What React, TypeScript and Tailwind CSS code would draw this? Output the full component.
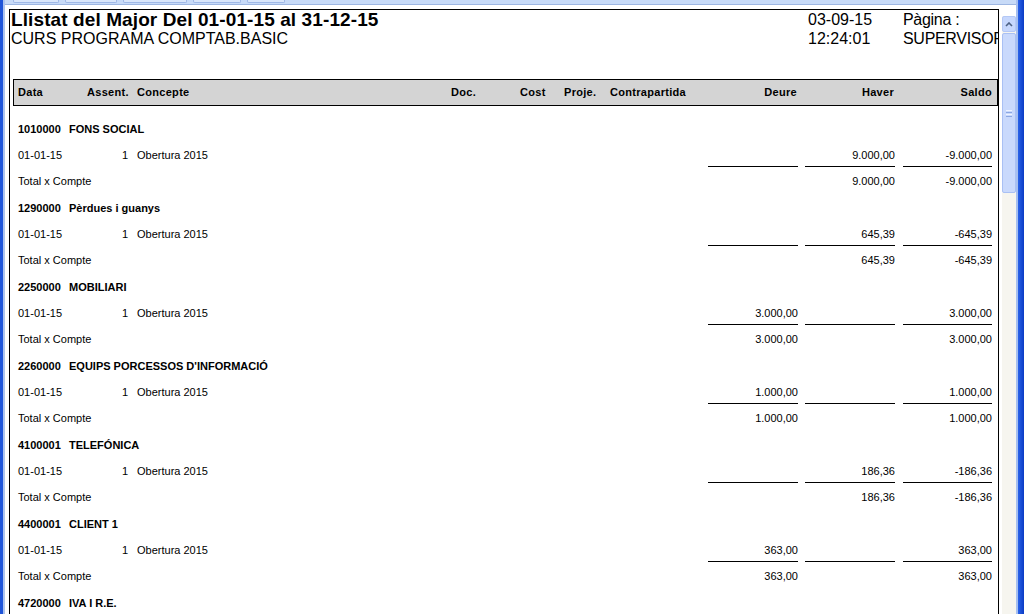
import React from "react"

type Account = {
    code: string
    name: string
    deure?: string
    haver?: string
    saldo?: string
    headOnly?: boolean
}

const accounts: Account[] = [
    { code: "1010000", name: "FONS SOCIAL", haver: "9.000,00", saldo: "-9.000,00" },
    { code: "1290000", name: "Pèrdues i guanys", haver: "645,39", saldo: "-645,39" },
    { code: "2250000", name: "MOBILIARI", deure: "3.000,00", saldo: "3.000,00" },
    { code: "2260000", name: "EQUIPS PORCESSOS D'INFORMACIÓ", deure: "1.000,00", saldo: "1.000,00" },
    { code: "4100001", name: "TELEFÓNICA", haver: "186,36", saldo: "-186,36" },
    { code: "4400001", name: "CLIENT 1", deure: "363,00", saldo: "363,00" },
    { code: "4720000", name: "IVA I R.E.", headOnly: true },
]

function ValueCells({ a, underline }: { a: Account; underline?: boolean }) {
    const cell = underline
        ? "h-[25px] pt-[2px] border-b border-black flex items-center justify-end"
        : "h-[27px] flex items-center justify-end"
    return (
        <>
            <div className={`w-[90px] shrink-0 ${cell}`}>{a.deure}</div>
            <div className="w-[7px] shrink-0" />
            <div className={`w-[90px] shrink-0 ${cell}`}>{a.haver}</div>
            <div className="w-[8px] shrink-0" />
            <div className={`w-[89px] shrink-0 ${cell}`}>{a.saldo}</div>
        </>
    )
}

function AccountGroup({ a }: { a: Account }) {
    return (
        <div className="flex flex-col shrink-0 text-[11px] leading-none">
            <div className="h-[26px] shrink-0 flex items-center pl-[8px] font-bold">
                <span className="w-[51px] shrink-0">{a.code}</span>
                <span>{a.name}</span>
            </div>
            {!a.headOnly && (
                <>
                    <div className="h-[26px] shrink-0 flex items-start pl-[8px]">
                        <div className="w-[69px] shrink-0 h-[25px] pt-[2px] flex items-center">01-01-15</div>
                        <div className="w-[50px] shrink-0 h-[25px] pt-[2px] flex items-center justify-end pr-[9px]">1</div>
                        <div className="w-[571px] shrink-0 h-[25px] pt-[2px] flex items-center">Obertura 2015</div>
                        <ValueCells a={a} underline />
                    </div>
                    <div className="h-[27px] shrink-0 flex items-center pl-[8px]">
                        <div className="w-[690px] shrink-0">Total x Compte</div>
                        <ValueCells a={a} />
                    </div>
                </>
            )}
        </div>
    )
}

function Scrollbar() {
    return (
        <div className="w-[14px] shrink-0 mt-[11px] flex flex-col bg-[#f6f5ef]">
            <div className="h-[16px] shrink-0 rounded-[2px] border border-[#b4c8f6] bg-[#c6d7fd] flex items-center justify-center">
                <svg width="8" height="5" viewBox="0 0 8 5">
                    <path d="M1 4 L4 1 L7 4" fill="none" stroke="#4d6185" strokeWidth="1.6" />
                </svg>
            </div>
            <div className="h-[160px] shrink-0 mt-[1px] rounded-[2px] border border-[#a9c0f4] bg-[#c9d9fc] flex flex-col items-center justify-center gap-[1px]">
                <div className="w-[6px] h-[1px] bg-[#eef3ff]" />
                <div className="w-[6px] h-[1px] bg-[#8ba7e3]" />
                <div className="w-[6px] h-[1px] bg-[#eef3ff]" />
                <div className="w-[6px] h-[1px] bg-[#8ba7e3]" />
            </div>
        </div>
    )
}

export default function App() {
    return (
        <div className="w-[1024px] h-[614px] overflow-hidden bg-white flex font-['Liberation_Sans',Arial,sans-serif] text-black">
            {/* left window frame */}
            <div className="w-[3px] shrink-0 bg-[#1f55d9]" />
            <div className="w-[2px] shrink-0 bg-[#aec4ee]" />

            <div className="flex-1 flex flex-col min-h-0">
                {/* toolbar remnant */}
                <div className="h-[5px] shrink-0 bg-[#c7daf7] border-b border-[#9db6e2] flex gap-[6px] px-[8px]">
                    <div className="w-[46px] h-[3px] rounded-b-[2px] border-x border-b border-[#9fb8e6] bg-[#d9e6fa]" />
                    <div className="w-[52px] h-[3px] rounded-b-[2px] border-x border-b border-[#9fb8e6] bg-[#d9e6fa]" />
                    <div className="w-[64px] h-[3px] rounded-b-[2px] border-x border-b border-[#9fb8e6] bg-[#d9e6fa]" />
                    <div className="w-[48px] h-[3px] rounded-b-[2px] border-x border-b border-[#9fb8e6] bg-[#d9e6fa]" />
                    <div className="w-[38px] h-[3px] rounded-b-[2px] border-x border-b border-[#9fb8e6] bg-[#d9e6fa]" />
                </div>

                <div className="flex-1 flex min-h-0">
                    <div className="w-[4px] shrink-0" />
                    {/* report page */}
                    <div className="w-[990px] shrink-0 mt-[4px] border border-black overflow-hidden flex flex-col self-start">
                        <div className="flex pl-[1px] shrink-0">
                            <div className="w-[797px] shrink-0 flex flex-col">
                                <div className="text-[19px] leading-[20px] font-bold tracking-[0.1px]">Llistat del Major Del 01-01-15 al 31-12-15</div>
                                <div className="text-[16px] leading-[17px]">CURS PROGRAMA COMPTAB.BASIC</div>
                            </div>
                            <div className="w-[95px] shrink-0 flex flex-col text-[16px]">
                                <div className="leading-[20px]">03-09-15</div>
                                <div className="leading-[17px]">12:24:01</div>
                            </div>
                            <div className="flex-1 min-w-0 flex flex-col text-[16px] whitespace-nowrap tracking-[-0.3px]">
                                <div className="leading-[20px]">Pàgina :</div>
                                <div className="leading-[17px]">SUPERVISOR</div>
                            </div>
                        </div>

                        {/* column header */}
                        <div className="shrink-0 mt-[32px] ml-[3px] h-[27px] border border-black bg-[#d4d4d4] flex items-center pl-[4px] text-[11px] font-bold tracking-[0.3px] leading-none">
                            <div className="w-[69px] shrink-0">Data</div>
                            <div className="w-[50px] shrink-0">Assent.</div>
                            <div className="w-[314px] shrink-0">Concepte</div>
                            <div className="w-[69px] shrink-0">Doc.</div>
                            <div className="w-[44px] shrink-0">Cost</div>
                            <div className="w-[46px] shrink-0">Proje.</div>
                            <div className="w-[98px] shrink-0">Contrapartida</div>
                            <div className="w-[90px] shrink-0 text-right pr-[1px]">Deure</div>
                            <div className="w-[7px] shrink-0" />
                            <div className="w-[90px] shrink-0 text-right pr-[1px]">Haver</div>
                            <div className="w-[8px] shrink-0" />
                            <div className="w-[89px] shrink-0 text-right">Saldo</div>
                        </div>

                        <div className="mt-[10px] flex flex-col shrink-0 pb-[20px]">
                            {accounts.map((a) => (
                                <AccountGroup key={a.code} a={a} />
                            ))}
                        </div>
                    </div>
                    <div className="w-[3px] shrink-0" />
                    <Scrollbar />
                </div>
            </div>

            {/* right window frame */}
            <div className="w-[2px] shrink-0 bg-[#a6bff0]" />
            <div className="w-[6px] shrink-0 bg-gradient-to-r from-[#2a62e8] to-[#0b3bc4]" />
        </div>
    )
}
